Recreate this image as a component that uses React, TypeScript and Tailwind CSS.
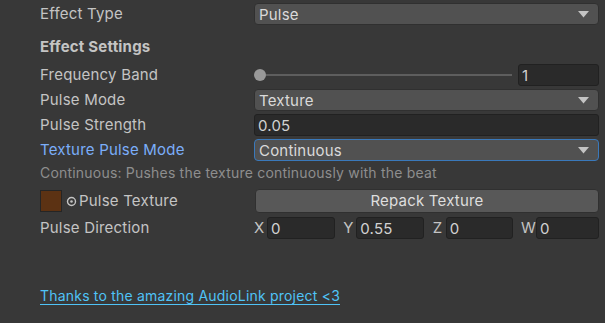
import React from 'react'

const label = 'text-[#c4c4c4]'

function Dropdown({ value, focused }: { value: string; focused?: boolean }) {
  return (
    <div
      className={`flex-1 h-[22px] flex items-center justify-between pl-[4px] pr-[9px] rounded-[4px] bg-[#515151] border ${
        focused ? 'border-[#3a79bb]' : 'border-[#303030]'
      }`}
    >
      <span className="text-[#dadada] leading-none">{value}</span>
      <svg width="11" height="7" viewBox="0 0 11 7">
        <path d="M0 0 H11 L5.5 6.5 Z" fill="#c4c4c4" />
      </svg>
    </div>
  )
}

function Field({ value, className = '' }: { value: string; className?: string }) {
  return (
    <div
      className={`h-[22px] flex items-center px-[3px] rounded-[3px] bg-[#2a2a2a] border border-[#212121] text-[#d2d2d2] leading-none ${className}`}
    >
      {value}
    </div>
  )
}

function Row({ name, children, blue }: { name: React.ReactNode; children: React.ReactNode; blue?: boolean }) {
  return (
    <div className="flex items-center h-[22px]">
      <div className={`w-[214px] shrink-0 ${blue ? 'text-[#7baefa]' : label}`}>{name}</div>
      <div className="flex-1 flex items-center">{children}</div>
    </div>
  )
}

function VecField({ axis, value, w }: { axis: string; value: string; w: string }) {
  return (
    <div className="flex items-center">
      <span className={`${label} ${axis === 'W' ? 'w-[15px]' : 'w-[13px]'}`}>{axis}</span>
      <Field value={value} className={w} />
    </div>
  )
}

export default function App() {
  return (
    <div
      className="w-[605px] h-[323px] bg-[#383838] text-[15px] tracking-[0.2px] pl-[40px] pr-[6px] pt-[3px] overflow-hidden"
      style={{ fontFamily: 'Inter, "Noto Sans", sans-serif' }}
    >
      <Row name="Effect Type">
        <Dropdown value="Pulse" />
      </Row>

      <div className="h-[39px] flex items-center font-bold text-[#c4c4c4] pt-[5px]">Effect Settings</div>

      <div className="flex flex-col gap-[3px]">
        <Row name="Frequency Band">
          <div className="flex-1 flex items-center pr-[6px]">
            <div className="w-[12px] h-[12px] rounded-full bg-[#999999] shrink-0" />
            <div className="flex-1 h-[2px] bg-[#5e5e5e]" />
          </div>
          <Field value="1" className="w-[81px]" />
        </Row>
        <Row name="Pulse Mode">
          <Dropdown value="Texture" />
        </Row>
        <Row name="Pulse Strength">
          <Field value="0.05" className="flex-1" />
        </Row>
        <Row name="Texture Pulse Mode" blue>
          <Dropdown value="Continuous" focused />
        </Row>
      </div>

      <div className="h-[23px] flex items-center text-[#8e8e8e] text-[14px]">
        Continuous: Pushes the texture continuously with the beat
      </div>

      <div className="flex flex-col gap-[4px] mt-[5px]">
        <div className="flex items-center h-[24px]">
          <div className="w-[215px] shrink-0 flex items-center">
            <div className="w-[22px] h-[22px] bg-[#5c3213] border border-[#252525]" />
            <svg width="11" height="11" viewBox="0 0 11 11" className="ml-[4px] mr-[2px]">
              <circle cx="5.5" cy="5.5" r="4" fill="none" stroke="#c4c4c4" strokeWidth="1.4" />
              <circle cx="5.5" cy="5.5" r="1.3" fill="#c4c4c4" />
            </svg>
            <span className={label}>Pulse Texture</span>
          </div>
          <div className="flex-1 h-[24px] flex items-center justify-center rounded-[4px] bg-[#585858] border border-[#303030] text-[#dedede]">
            Repack Texture
          </div>
        </div>

        <Row name="Pulse Direction">
          <div className="flex-1 flex items-center justify-between">
            <VecField axis="X" value="0" w="w-[68px]" />
            <VecField axis="Y" value="0.55" w="w-[68px]" />
            <VecField axis="Z" value="0" w="w-[67px]" />
            <VecField axis="W" value="0" w="w-[63px]" />
          </div>
        </Row>
      </div>

      <div className="mt-[46px]">
        <span className="text-[14px] text-[#4fc3f7] underline underline-offset-[3px] decoration-1">
          Thanks to the amazing AudioLink project &lt;3
        </span>
      </div>
    </div>
  )
}
